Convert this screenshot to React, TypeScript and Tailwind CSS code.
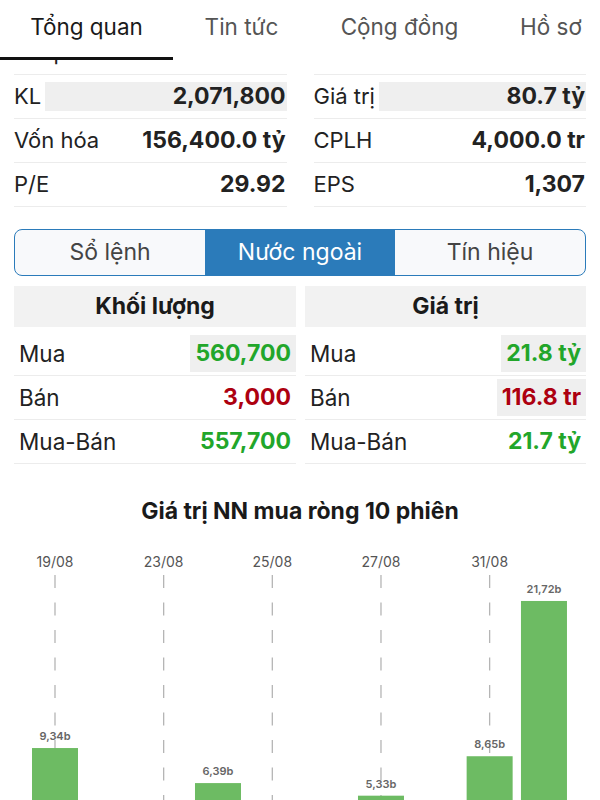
import React from 'react';

const FONT = { fontFamily: 'Inter, "Noto Sans", "Liberation Sans", sans-serif' };

const TABS = [
  { label: 'Tổng quan', w: 'w-[173px]', active: true },
  { label: 'Tin tức', w: 'w-[137px]', active: false },
  { label: 'Cộng đồng', w: 'w-[179px]', active: false },
  { label: 'Hồ sơ', w: 'w-[124px]', active: false },
];

type InfoRow = { label: string; value: string; color?: string; hl?: boolean };

const INFO_LEFT: InfoRow[] = [
  { label: 'Thấp nhất', value: '38.80', color: 'text-[#b3000f]' },
  { label: 'KL', value: '2,071,800', hl: true },
  { label: 'Vốn hóa', value: '156,400.0 tỷ' },
  { label: 'P/E', value: '29.92' },
];

const INFO_RIGHT: InfoRow[] = [
  { label: 'Cao nhất', value: '39.75', color: 'text-[#22a62a]' },
  { label: 'Giá trị', value: '80.7 tỷ', hl: true },
  { label: 'CPLH', value: '4,000.0 tr' },
  { label: 'EPS', value: '1,307' },
];

const GREEN = 'text-[#22a62a]';
const RED = 'text-[#ad0010]';

const VOLUME: InfoRow[] = [
  { label: 'Mua', value: '560,700', color: GREEN, hl: true },
  { label: 'Bán', value: '3,000', color: RED },
  { label: 'Mua-Bán', value: '557,700', color: GREEN },
];

const VALUE: InfoRow[] = [
  { label: 'Mua', value: '21.8 tỷ', color: GREEN, hl: true },
  { label: 'Bán', value: '116.8 tr', color: RED, hl: true },
  { label: 'Mua-Bán', value: '21.7 tỷ', color: GREEN },
];

// index in the 10 sessions -> value (only the visible ones)
const BARS = [
  { i: 0, v: 9.34, label: '9,34b' },
  { i: 3, v: 6.39, label: '6,39b' },
  { i: 6, v: 5.33, label: '5,33b' },
  { i: 8, v: 8.65, label: '8,65b' },
  { i: 9, v: 21.72, label: '21,72b' },
];
const DATES = ['19/08', '23/08', '25/08', '27/08', '31/08'];

const InfoColumn = ({ rows }: { rows: InfoRow[] }) => (
  <div className="flex flex-col">
    {rows.map((r) => (
      <div key={r.label} className="h-[44px] flex items-center border-b border-[#ececec]">
        <span className="text-[22px] text-[#222]">{r.label}</span>
        <div
          className={`flex-1 ml-[4px] h-[29px] flex items-center justify-end pr-[1px] ${
            r.hl ? 'bg-[#efefef]' : ''
          }`}
        >
          <span className={`text-[23px] font-bold ${r.color ?? 'text-[#222]'}`}>{r.value}</span>
        </div>
      </div>
    ))}
  </div>
);

const TradeColumn = ({ title, rows }: { title: string; rows: InfoRow[] }) => (
  <div className="flex flex-col">
    <div className="h-[41px] bg-[#f2f2f2] flex items-center justify-center text-[23px] font-bold text-[#1a1a1a]">
      {title}
    </div>
    <div className="mt-[5px]">
      {rows.map((r) => (
        <div key={r.label} className="h-[44px] flex items-center justify-between border-b border-[#ececec]">
          <span className="pl-[5px] text-[22.5px] text-[#222]">{r.label}</span>
          <span
            className={`h-[37px] flex items-center px-[5px] text-[23px] font-bold ${r.color} ${
              r.hl ? 'bg-[#efefef]' : ''
            }`}
          >
            {r.value}
          </span>
        </div>
      ))}
    </div>
  </div>
);

const Chart = () => {
  const x0 = 55;
  const step = 54.33;
  const base = 320;
  const scale = 11.88;
  return (
    <svg width="600" height="330" className="block">
      {DATES.map((d, k) => {
        const x = x0 + step * 2 * k;
        return (
          <g key={d}>
            <text x={x} y={28} textAnchor="middle" fontSize="14" fill="#555">
              {d}
            </text>
            <line
              x1={x}
              x2={x}
              y1={36}
              y2={330}
              stroke="#b5b5b5"
              strokeWidth="1.3"
              strokeDasharray="13 14.5"
            />
          </g>
        );
      })}
      {BARS.map((b) => {
        const cx = x0 + step * b.i;
        const top = base - b.v * scale;
        return (
          <g key={b.i}>
            <rect x={cx - 23} y={top} width={46} height={b.v * scale} fill="#6dbb63" />
            <text x={cx} y={top - 8} textAnchor="middle" fontSize="11" fontWeight="600" fill="#666">
              {b.label}
            </text>
          </g>
        );
      })}
    </svg>
  );
};

export default function App() {
  return (
    <div className="w-[600px] h-[800px] overflow-hidden bg-white" style={FONT}>
      {/* Top tabs */}
      <div className="relative z-10 h-[60px] bg-white flex overflow-hidden">
        {TABS.map((t) => (
          <div key={t.label} className={`${t.w} shrink-0 flex flex-col items-center`}>
            <div
              className={`flex-1 flex items-center pb-[3px] text-[22.5px] ${
                t.active ? 'text-[#1a1a1a]' : 'text-[#555]'
              }`}
            >
              {t.label}
            </div>
            <div className={`h-[3px] w-full ${t.active ? 'bg-[#111]' : ''}`} />
          </div>
        ))}
      </div>

      <div className="-mt-[29px] px-[14px]">
        {/* Summary info */}
        <div className="grid grid-cols-2 gap-x-[27px]">
          <InfoColumn rows={INFO_LEFT} />
          <InfoColumn rows={INFO_RIGHT} />
        </div>

        {/* Segmented control */}
        <div className="mt-[22px] h-[47px] flex rounded-[8px] border-[1.5px] border-[#2b7bba] overflow-hidden bg-[#f8f9fb]">
          {['Sổ lệnh', 'Nước ngoài', 'Tín hiệu'].map((s, k) => (
            <div
              key={s}
              className={`flex-1 flex items-center justify-center text-[23px] ${
                k === 1 ? 'bg-[#2b7bba] text-white' : 'text-[#444]'
              }`}
            >
              {s}
            </div>
          ))}
        </div>

        {/* Foreign trading */}
        <div className="mt-[10px] grid grid-cols-[282px_281px] gap-x-[9px]">
          <TradeColumn title="Khối lượng" rows={VOLUME} />
          <TradeColumn title="Giá trị" rows={VALUE} />
        </div>
      </div>

      {/* Chart */}
      <div className="mt-[33px] h-[28px] flex items-center justify-center text-[23px] font-bold text-[#1a1a1a]">
        Giá trị NN mua ròng 10 phiên
      </div>
      <div className="mt-[14px]">
        <Chart />
      </div>
    </div>
  );
}
